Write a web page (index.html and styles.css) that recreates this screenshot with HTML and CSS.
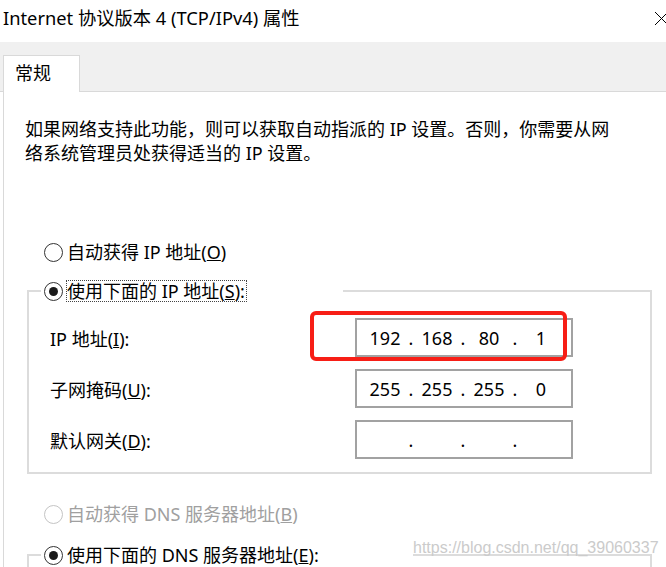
FILE: index.html
```html
<!DOCTYPE html>
<html lang="zh-CN">
<head>
    <meta charset="UTF-8">
    <title>Internet 协议版本 4 (TCP/IPv4) 属性</title>
    <link rel="stylesheet" href="styles.css">
</head>
<body>
    <div class="window">
        <div class="titlebar">
            <span class="title">Internet 协议版本 4 (TCP/IPv4) 属性</span>
            <svg class="close" width="11" height="13" viewBox="0 0 11 13">
                <line x1="0" y1="0" x2="13" y2="13" stroke="#000" stroke-width="1"/>
                <line x1="0" y1="13" x2="13" y2="0" stroke="#000" stroke-width="1"/>
            </svg>
        </div>

        <div class="tabs">
            <div class="tab">常规</div>
        </div>

        <div class="panel">
            <p class="intro">如果网络支持此功能，则可以获取自动指派的 IP 设置。否则，你需要从网<br>络系统管理员处获得适当的 IP 设置。</p>

            <div class="option radio-row">
                <span class="dot"></span>
                <span>自动获得 IP 地址(<u>O</u>)</span>
            </div>

            <fieldset class="group">
                <legend class="option checked">
                    <span class="dot"></span>
                    <span class="focus">使用下面的 IP 地址(<u>S</u>):</span>
                </legend>
                <div class="fields">
                    <div class="field-row">
                        <label>IP 地址(<u>I</u>):</label>
                        <div class="ip">
                            <span>192</span><span>.</span><span>168</span><span>.</span><span>80</span><span>.</span><span>1</span>
                            <div class="mark"></div>
                        </div>
                    </div>
                    <div class="field-row">
                        <label>子网掩码(<u>U</u>):</label>
                        <div class="ip">
                            <span>255</span><span>.</span><span>255</span><span>.</span><span>255</span><span>.</span><span>0</span>
                        </div>
                    </div>
                    <div class="field-row">
                        <label>默认网关(<u>D</u>):</label>
                        <div class="ip">
                            <span></span><span>.</span><span></span><span>.</span><span></span><span>.</span><span></span>
                        </div>
                    </div>
                </div>
            </fieldset>

            <div class="option radio-row dns-auto disabled">
                <span class="dot"></span>
                <span>自动获得 DNS 服务器地址(<u>B</u>)</span>
            </div>

            <fieldset class="group dns">
                <legend class="option checked">
                    <span class="dot"></span>
                    <span class="plain">使用下面的 DNS 服务器地址(<u>E</u>):</span>
                </legend>
                <div class="fields"></div>
            </fieldset>
        </div>

        <div class="watermark">https://blog.csdn.net/qq_39060337</div>
    </div>
</body>
</html>
```

FILE: styles.css
```css
body {
    margin: 0;
    background: #fff;
    color: #000;
    font-family: "Noto Sans", "Noto Sans CJK SC", sans-serif;
    font-size: 18px;
    overflow: hidden;
}
.window {
    position: relative;
    width: 666px;
    height: 567px;
    overflow: hidden;
}
.titlebar {
    height: 42px;
    box-sizing: border-box;
    display: flex;
    align-items: center;
    justify-content: space-between;
    padding: 0 0 6px 3px;
}
.title {
    line-height: 22px;
    font-size: 18.3px;
}
.close {
    align-self: flex-start;
    margin-top: 12px;
}
.tabs {
    height: 50px;
    box-sizing: border-box;
    background: #f0f0f0;
    border-bottom: 1px solid #d9d9d9;
    display: flex;
    align-items: flex-end;
    padding-left: 3px;
}
.tab {
    width: 77px;
    height: 37px;
    box-sizing: border-box;
    margin-bottom: -1px;
    background: #fff;
    border: 1px solid #d9d9d9;
    border-bottom: none;
    padding: 8px 0 0 11px;
    line-height: 18px;
}
.panel {
    margin-left: 3px;
    border-left: 1px solid #d9d9d9;
    padding: 25px 0 0 21px;
    height: 500px;
}
.intro {
    margin: 0;
    line-height: 24px;
}
.option {
    display: flex;
    align-items: center;
    gap: 4px;
    height: 22px;
    line-height: 22px;
}
.radio-row {
    margin: 76px 0 0 19px;
}
.dot {
    width: 19px;
    height: 19px;
    box-sizing: border-box;
    border: 1.5px solid #333;
    border-radius: 50%;
    background: #fff;
    display: flex;
    align-items: center;
    justify-content: center;
    flex: none;
}
.checked .dot::after {
    content: "";
    width: 9px;
    height: 9px;
    border-radius: 50%;
    background: #1a1a1a;
}
.disabled {
    color: #a0a0a0;
}
.disabled .dot {
    border-color: #c4c4c4;
}
.group {
    margin: 17px 0 0 2px;
    width: 625px;
    box-sizing: border-box;
    border: 2px solid #dcdcdc;
    padding: 0;
    min-width: 0;
}
.group legend {
    margin-left: 12px;
    padding: 0 0 0 3px;
    width: 302px;
    box-sizing: border-box;
    gap: 3px;
}
.group.dns legend {
    width: 372px;
}
.focus {
    border: 1px dotted #444;
    padding: 0 1px 0 0;
    line-height: 20px;
}
.plain {
    padding-left: 1px;
}
.fields {
    display: flex;
    flex-direction: column;
    gap: 12px;
    padding: 16px 0 13px 21px;
}
.dns .fields {
    height: 80px;
}
.field-row {
    display: grid;
    grid-template-columns: 305px 218px;
    align-items: center;
}
.ip {
    position: relative;
    height: 39px;
    box-sizing: border-box;
    border: 2px solid #a2a2a2;
    display: grid;
    grid-template-columns: 46px 6px 46px 6px 46px 6px 46px;
    align-items: center;
    padding-left: 5px;
    text-align: center;
    line-height: 20px;
}
.mark {
    position: absolute;
    left: -47px;
    top: -9px;
    width: 257px;
    height: 50px;
    box-sizing: border-box;
    border: 4px solid #f71e16;
    border-radius: 6px;
}
.dns-auto {
    margin-top: 29px;
}
.group.dns {
    margin-top: 19px;
}
.watermark {
    position: absolute;
    left: 413px;
    top: 539px;
    font-family: "Liberation Sans", Arial, sans-serif;
    font-size: 16px;
    line-height: 18px;
    color: #cbcbcb;
}
```
